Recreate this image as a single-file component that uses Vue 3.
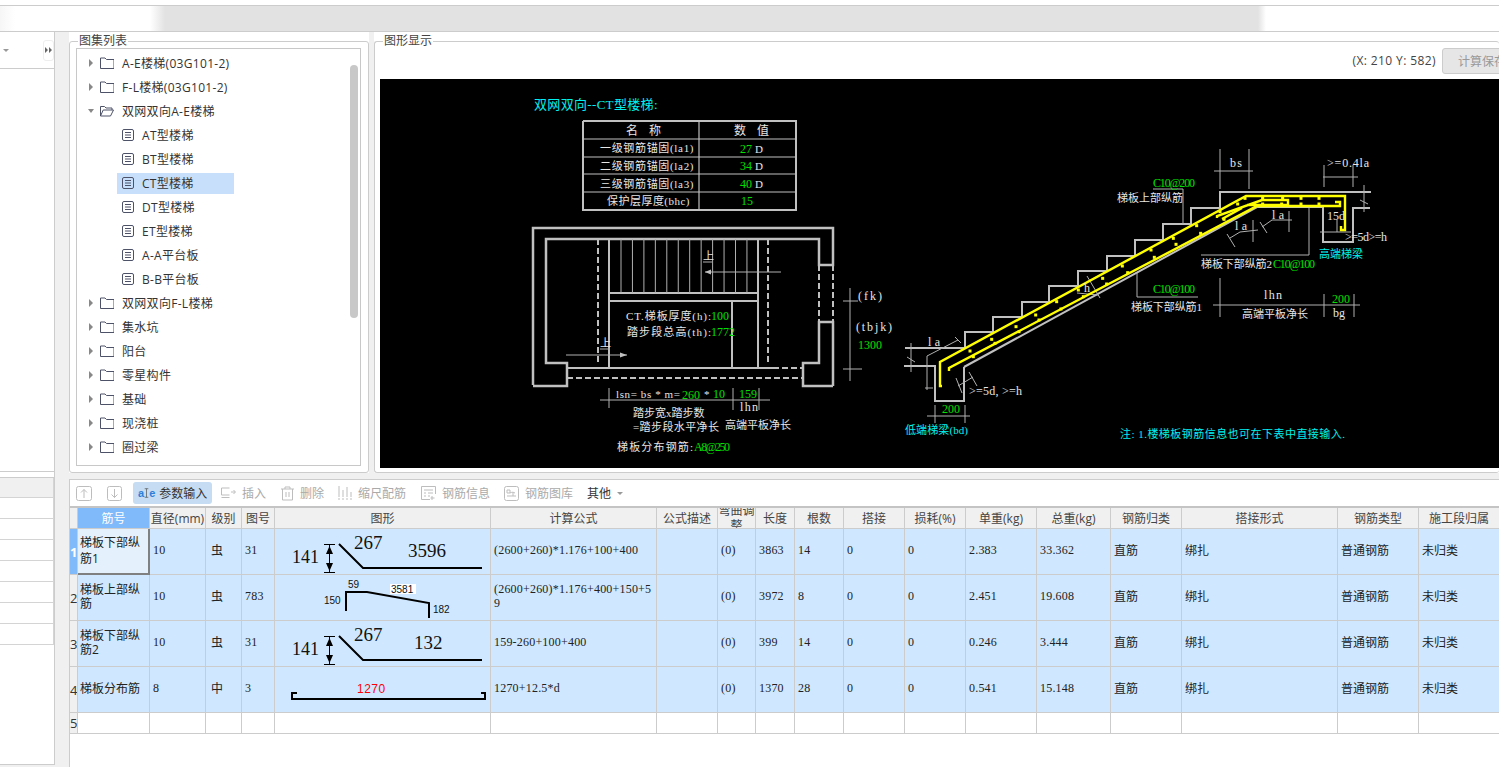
<template>
  <div class="app">
    <div class="topbar"><div class="blur"></div></div>

    <div class="main">
      <aside class="side">
        <div class="side-top">
          <span class="caret"></span>
          <span class="more">
            <svg width="7" height="6" viewBox="0 0 7 6"><path d="M0 0l3 3-3 3zM4 0l3 3-3 3z" /></svg>
          </span>
        </div>
        <div class="side-mid"></div>
        <div class="side-table">
          <div class="side-head"></div>
          <div v-for="n in 7" :key="n" class="side-row"></div>
        </div>
      </aside>

      <div class="content">
        <div class="upper">
          <section class="group tree-group">
            <div class="frame">
              <span class="legend">图集列表</span>
              <div class="tree">
                <div v-for="(item, i) in tree" :key="i" class="node" :class="{ leaf: item.type === 'doc' }">
                  <template v-if="item.type !== 'doc'">
                    <svg class="arrow" width="6" height="8" viewBox="0 0 6 8">
                      <path v-if="item.type === 'open'" d="M0 2h6L3 6z" />
                      <path v-else d="M1 0l4 4-4 4z" />
                    </svg>
                    <svg class="folder" width="14" height="12" viewBox="0 0 14 12">
                      <path v-if="item.type === 'open'" d="M.5 11V1.500h4l1.500 1.500h6v2M.5 11h10l3-6H3.200L.5 11z" />
                      <path v-else d="M.5 11.500v-10.500h4.500l1.500 1.500h7.500v9z" />
                    </svg>
                    <span>{{ item.label }}</span>
                  </template>
                  <div v-else class="leaf-in" :class="{ selected: item.selected }">
                    <svg class="doc" width="12" height="12" viewBox="0 0 12 12">
                      <rect x=".5" y=".5" width="11" height="11" rx="1.500" />
                      <path d="M3 3.500h6M3 6h6M3 8.500h6" />
                    </svg>
                    <span>{{ item.label }}</span>
                  </div>
                </div>
              </div>
              <div class="scrollbar"></div>
            </div>
          </section>

          <section class="group draw-group">
            <div class="frame draw-frame">
              <span class="legend">图形显示</span>
              <div class="coord-row">
                <span class="coord">(X: 210 Y: 582)</span>
                <button class="save" disabled>计算保存</button>
              </div>
              <div class="canvas">
                <svg class="cad" width="1119" height="389" viewBox="380 79 1119 389">
                  <polyline v-for="(p, i) in thick" :key="'k' + i" :points="p" class="l-thick" />
                  <polyline v-for="(p, i) in profile" :key="'p' + i" :points="p" class="l-profile" />
                  <polyline v-for="(p, i) in mid" :key="'m' + i" :points="p" class="l-mid" />
                  <polyline v-for="(p, i) in dashed" :key="'d' + i" :points="p" class="l-dash" />
                  <polyline v-for="(p, i) in thin" :key="'t' + i" :points="p" class="l-thin" />
                  <polygon points="705,272 711,269.500 711,274.500" fill="#c0c0c0" />
                  <polygon points="627,355 620,352.500 620,357.500" fill="#c0c0c0" />
                  <polyline v-for="(p, i) in rebar" :key="'r' + i" :points="p" class="l-bar" />
                  <rect v-for="(d, i) in dots" :key="'o' + i" :x="d[0] - 1.500" :y="d[1] - 1.500" width="3" height="3" fill="#ffff00" />
                  <text
                    v-for="(t, i) in labels"
                    :key="'x' + i"
                    :x="t.x"
                    :y="t.y"
                    :fill="colors[t.c || 'w']"
                    :font-size="t.s || 11"
                    :textLength="textWidth(t)"
                  >{{ t.t }}</text>
                </svg>
              </div>
            </div>
          </section>
        </div>

        <section class="panel">
          <div class="toolbar">
            <span class="tool">
              <svg width="16" height="15" viewBox="0 0 16 15"><rect x=".5" y=".5" width="15" height="14" rx="2" /><path d="M8 12V3.500M5 6.500l3-3 3 3" /></svg>
            </span>
            <span class="tool">
              <svg width="15" height="15" viewBox="0 0 15 15"><rect x=".5" y=".5" width="14" height="14" rx="2" /><path d="M7.500 3v8.500M4.500 8.500l3 3 3-3" /></svg>
            </span>
            <span class="tool active">
              <span class="ae">a<svg width="5" height="14" viewBox="0 0 7 14"><path d="M1 1h5M1 13h5M3.500 1v12" /></svg>e</span>
              <span>参数输入</span>
            </span>
            <span class="tool off">
              <svg width="15" height="12" viewBox="0 0 15 12"><path d="M8.500 1h-8v7h8M.5 10.500h8M10 5h4M12.500 3l2 2-2 2" /></svg>
              <span>插入</span>
            </span>
            <span class="tool off tight">
              <svg width="13" height="15" viewBox="0 0 13 15"><path d="M0 3h13M4 3V1h5v2M1.500 3v11h10V3M5 6v5M8 6v5" /></svg>
              <span>删除</span>
            </span>
            <span class="tool off">
              <svg width="14" height="14" viewBox="0 0 14 14"><path d="M1 0v11M5 4v7M9 1v10M13 6v5M0 13h2M4 13h2M8 13h2M12 13h2" /></svg>
              <span>缩尺配筋</span>
            </span>
            <span class="tool off tight">
              <svg width="15" height="15" viewBox="0 0 15 15"><path d="M9 13.500H.5v-13h14V8M3 4h9M3 7h2M7 7h5M3 10h2M7 10h2M11 10v4M9.500 12h4" /></svg>
              <span>钢筋信息</span>
            </span>
            <span class="tool off">
              <svg width="15" height="15" viewBox="0 0 15 15"><rect x=".5" y=".5" width="14" height="14" rx="2" /><path d="M3 4h3v3H3zM3 10h9M9 6v4M6 7c2-1 3-1 5 0" /></svg>
              <span>钢筋图库</span>
            </span>
            <span class="tool other">
              <span>其他</span>
              <span class="caret small"></span>
            </span>
          </div>

          <table class="grid">
            <colgroup>
              <col :style="{ width: '8px' }" />
              <col v-for="c in columns" :key="c.key" :style="{ width: c.w + 'px' }" />
            </colgroup>
            <thead>
              <tr>
                <th class="corner"></th>
                <th v-for="c in columns" :key="c.key" :class="{ current: c.key === 'name' }">
                  <div class="th-in">{{ c.label }}</div>
                </th>
              </tr>
            </thead>
            <tbody>
              <tr v-for="(row, i) in rows" :key="row.name">
                <td class="rowno" :class="{ current: i === 0 }"><div>{{ i + 1 }}</div></td>
                <td
                  v-for="c in columns"
                  :key="c.key"
                  :class="[c.cls, { editing: i === 0 && c.key === 'name' }]"
                >
                  <svg v-if="c.key === 'shape'" class="shape" width="216" height="46" viewBox="0 0 216 46">
                    <template v-if="row.shape === 'bent'">
                      <text class="big" x="18" y="35" font-size="18">141</text>
                      <text class="big" x="80" y="21" font-size="19">267</text>
                      <text class="big" :x="row.lx" y="29" font-size="19">{{ row.lt }}</text>
                      <path d="M50 16.500h11M50 44.500h11M55.500 17v27" class="ink1" />
                      <path d="M55.500 18l-3.500 8h7zM55.500 43l-3.500-8h7z" fill="#000" />
                      <path d="M65 16l24 24h119" class="ink2" />
                    </template>
                    <template v-else-if="row.shape === 'crank'">
                      <rect x="116" y="10" width="26" height="10" fill="#fff" />
                      <text class="small" x="74" y="14">59</text>
                      <text class="small" x="117" y="19">3581</text>
                      <text class="small" x="50" y="30">150</text>
                      <text class="small" x="159" y="39">182</text>
                      <path d="M72 37V18h21l62 11v15" class="ink2" />
                    </template>
                    <template v-else>
                      <text class="red" x="83" y="27">1270</text>
                      <path d="M23 27h-5v6h193v-6h-4" class="ink2" />
                    </template>
                  </svg>
                  <template v-else>{{ row[c.key] }}</template>
                </td>
              </tr>
              <tr class="empty">
                <td class="rowno"><div>5</div></td>
                <td v-for="c in columns" :key="c.key"></td>
              </tr>
            </tbody>
          </table>
        </section>
      </div>
    </div>
  </div>
</template>

<script setup>
const tree = [
  { label: 'A-E楼梯(03G101-2)', type: 'folder' },
  { label: 'F-L楼梯(03G101-2)', type: 'folder' },
  { label: '双网双向A-E楼梯', type: 'open' },
  { label: 'AT型楼梯', type: 'doc' },
  { label: 'BT型楼梯', type: 'doc' },
  { label: 'CT型楼梯', type: 'doc', selected: true },
  { label: 'DT型楼梯', type: 'doc' },
  { label: 'ET型楼梯', type: 'doc' },
  { label: 'A-A平台板', type: 'doc' },
  { label: 'B-B平台板', type: 'doc' },
  { label: '双网双向F-L楼梯', type: 'folder' },
  { label: '集水坑', type: 'folder' },
  { label: '阳台', type: 'folder' },
  { label: '零星构件', type: 'folder' },
  { label: '基础', type: 'folder' },
  { label: '现浇桩', type: 'folder' },
  { label: '圈过梁', type: 'folder' },
  { label: '', type: 'folder' }
]

const columns = [
  { key: 'name', label: '筋号', w: 72, cls: 'txt name' },
  { key: 'dia', label: '直径(mm)', w: 56, cls: 'num' },
  { key: 'grade', label: '级别', w: 36, cls: 'txt grade' },
  { key: 'fig', label: '图号', w: 33, cls: 'num' },
  { key: 'shape', label: '图形', w: 216, cls: 'fig' },
  { key: 'formula', label: '计算公式', w: 166, cls: 'num' },
  { key: 'desc', label: '公式描述', w: 61, cls: 'txt' },
  { key: 'adj', label: '弯曲调整', w: 38, cls: 'num' },
  { key: 'len', label: '长度', w: 39, cls: 'num' },
  { key: 'count', label: '根数', w: 49, cls: 'num' },
  { key: 'lap', label: '搭接', w: 61, cls: 'num' },
  { key: 'loss', label: '损耗(%)', w: 61, cls: 'num' },
  { key: 'unit', label: '单重(kg)', w: 71, cls: 'num' },
  { key: 'total', label: '总重(kg)', w: 74, cls: 'num' },
  { key: 'cat', label: '钢筋归类', w: 71, cls: 'txt' },
  { key: 'form', label: '搭接形式', w: 156, cls: 'txt' },
  { key: 'type', label: '钢筋类型', w: 81, cls: 'txt' },
  { key: 'seg', label: '施工段归属', w: 81, cls: 'txt' }
]

const common = { desc: '', adj: '(0)', lap: '0', loss: '0', cat: '直筋', form: '绑扎', type: '普通钢筋', seg: '未归类' }

const rows = [
  { ...common, name: '梯板下部纵筋1', dia: '10', grade: '虫', fig: '31', shape: 'bent', lt: '3596', lx: 134, formula: '(2600+260)*1.176+100+400', len: '3863', count: '14', unit: '2.383', total: '33.362' },
  { ...common, name: '梯板上部纵筋', dia: '10', grade: '虫', fig: '783', shape: 'crank', formula: '(2600+260)*1.176+400+150+59', len: '3972', count: '8', unit: '2.451', total: '19.608' },
  { ...common, name: '梯板下部纵筋2', dia: '10', grade: '虫', fig: '31', shape: 'bent', lt: '132', lx: 140, formula: '159-260+100+400', len: '399', count: '14', unit: '0.246', total: '3.444' },
  { ...common, name: '梯板分布筋', dia: '8', grade: '中', fig: '3', shape: 'hook', formula: '1270+12.5*d', len: '1370', count: '28', unit: '0.541', total: '15.148' }
]

const colors = { w: '#e6e6e6', g: '#00e000', c: '#00f0f0' }

// cad text follows the old bitmap font: full width for cjk, half for the rest
function textWidth(t) {
  if (t.w) return t.w
  const size = t.s || 11
  let width = 0
  for (const ch of t.t) width += ch.charCodeAt(0) > 255 ? size : size / 2
  return width
}

const stairLines = []
for (let i = 0; i < 12; i++) {
  const x = 621 + i * 11.45
  stairLines.push(`${x},239 ${x},293`)
}

const thick = [
  '533,385 533,228 833,228 833,265 819,265 819,239 546,239 546,363 567,363 567,386 533,386',
  '833,386 833,322 819,322 819,363 803,363 803,386 833,386'
]

const profile = [
  '583,121 796,121 796,210 583,210 583,121',
  '567,368 773,368',
  '609,239 609,368',
  '758,239 758,368',
  '732,301 732,368',
  '609,293 758,293',
  '609,301 758,301',
  '905,348 965,348 965,332 993,332 993,317 1022,317 1022,302 1049,302 1049,286 1078,286 1078,271 1107,271 1107,256 1135,256 1135,240 1163,240 1163,224 1191,224 1191,208 1220,208 1220,192 1371,192',
  '964,367 1257,207 1323,207 1323,242 1353,242 1353,208 1370,208',
  '904,366 935,366 935,401 964,401 964,367'
]

const mid = [
  '699,121 699,210',
  '583,139 796,139',
  '583,157 796,157',
  '583,174 796,174',
  '583,192 796,192'
]

const dashed = [
  '773,368 803,368',
  '567,378 803,378',
  '598,239 598,365',
  '768,239 768,365',
  '819,265 819,322',
  '833,265 833,322'
]

const thin = [
  ...stairLines,
  '781,272 705,272',
  '566,355 627,355',
  '703,262 712,262',
  '600,349 610,349',
  '609,388 609,408',
  '600,400 770,400',
  '733,388 733,410',
  '759,388 759,410',
  '850,288 850,381',
  '843,301 858,301',
  '843,369 862,369',
  '1220,149 1220,189',
  '1249,149 1249,189',
  '1214,171 1253,171',
  '1323,177 1358,177',
  '1324,165 1324,187',
  '1353,165 1353,187',
  '1153,189 1183,189 1183,224',
  '1201,255 1309,255 1309,208',
  '1137,273 1137,297 1198,297',
  '1213,305 1360,305',
  '1220,278 1220,317',
  '1324,294 1324,317',
  '1354,294 1354,317',
  '1262,227 1272,220 1292,220',
  '1289,211 1289,232',
  '1260,222 1267,233',
  '1230,238 1240,232 1258,230',
  '1253,220 1253,242',
  '1227,234 1235,247',
  '1087,276 1100,298',
  '1077,293 1098,295',
  '927,390 927,356 958,340',
  '925,388 933,388',
  '955,337 961,343',
  '911,343 911,372',
  '907,357 915,362',
  '1364,185 1364,212',
  '1360,200 1368,204',
  '956,378 962,393',
  '969,372 977,386',
  '958,386 973,377',
  '927,416 970,416',
  '935,405 935,423',
  '965,405 965,423',
  '1320,232 1351,232',
  '1337,220 1337,232'
]

const rebar = [
  '942,386 940,386 940,362 1246,196 1345,196 1345,230 1341,230 1341,226',
  '949,371 949,368 1257,206 1340,206 1340,202 1335,202',
  '1217,218 1217,216 1262,200 1288,200 1288,205 1247,205',
  '1222,219 1242,208'
]

const dotsZoom = [
  [240, 663], [305, 628], [378, 590], [437, 555], [500, 515], [565, 480], [638, 445], [697, 408], [783, 360], [850, 325], [920, 287], [990, 245], [1065, 205], [1118, 205], [1178, 205], [1233, 205], [1287, 205],
  [250, 680], [315, 640], [387, 605], [447, 570], [513, 537], [580, 500], [650, 462], [713, 428], [793, 382], [858, 343], [932, 310], [1002, 268], [1043, 222], [1118, 222], [1175, 222], [1233, 222], [1287, 222]
]
const dots = dotsZoom.map(([x, y]) => [890 + x / 3, 130 + y / 3])

const labels = [
  { x: 534, y: 109, t: '双网双向--CT型楼梯:', c: 'c', s: 13 },
  { x: 626, y: 135, t: '名', s: 12 },
  { x: 649, y: 135, t: '称', s: 12 },
  { x: 734, y: 135, t: '数', s: 12 },
  { x: 757, y: 135, t: '值', s: 12 },
  { x: 600, y: 152, t: '一级钢筋锚固(la1)' },
  { x: 600, y: 170, t: '二级钢筋锚固(la2)' },
  { x: 600, y: 188, t: '三级钢筋锚固(la3)' },
  { x: 607, y: 205, t: '保护层厚度(bhc)' },
  { x: 740, y: 153, t: '27', c: 'g', s: 12 },
  { x: 755, y: 153, t: 'D' },
  { x: 740, y: 170, t: '34', c: 'g', s: 12 },
  { x: 755, y: 170, t: 'D' },
  { x: 740, y: 188, t: '40', c: 'g', s: 12 },
  { x: 755, y: 188, t: 'D' },
  { x: 741, y: 205, t: '15', c: 'g', s: 12 },
  { x: 703, y: 260, t: '上' },
  { x: 600, y: 347, t: '上' },
  { x: 626, y: 320, t: 'CT.梯板厚度(h):', w: 85 },
  { x: 711, y: 320, t: '100', c: 'g', s: 12 },
  { x: 627, y: 336, t: '踏步段总高(th):', w: 84 },
  { x: 711, y: 336, t: '1772', c: 'g', s: 12 },
  { x: 616, y: 398, t: 'lsn= bs * m=', w: 64 },
  { x: 682, y: 399, t: '260', c: 'g', s: 12 },
  { x: 704, y: 398, t: '*' },
  { x: 713, y: 398, t: '10', c: 'g', s: 12 },
  { x: 739, y: 398, t: '159', c: 'g', s: 12 },
  { x: 740, y: 411, t: 'lhn', s: 12 },
  { x: 633, y: 417, t: '踏步宽x踏步数' },
  { x: 633, y: 431, t: '=踏步段水平净长', w: 86 },
  { x: 725, y: 429, t: '高端平板净长' },
  { x: 617, y: 451, t: '梯板分布钢筋:', w: 76 },
  { x: 694, y: 451, t: 'A8@250', c: 'g', s: 12 },
  { x: 858, y: 300, t: '(fk)', s: 12 },
  { x: 856, y: 331, t: '(tbjk)', s: 12 },
  { x: 858, y: 349, t: '1300', c: 'g', s: 12 },
  { x: 1230, y: 167, t: 'bs', s: 12 },
  { x: 1327, y: 167, t: '>=0.4la', w: 42, s: 12 },
  { x: 1153, y: 187, t: 'C10@200', c: 'g', w: 42, s: 12 },
  { x: 1117, y: 202, t: '梯板上部纵筋' },
  { x: 1201, y: 268, t: '梯板下部纵筋2', w: 71 },
  { x: 1273, y: 268, t: 'C10@100', c: 'g', w: 42, s: 12 },
  { x: 1153, y: 293, t: 'C10@100', c: 'g', w: 42, s: 12 },
  { x: 1131, y: 311, t: '梯板下部纵筋1', w: 71 },
  { x: 1264, y: 299, t: 'lhn', s: 12 },
  { x: 1242, y: 318, t: '高端平板净长' },
  { x: 1332, y: 303, t: '200', c: 'g', s: 12 },
  { x: 1333, y: 317, t: 'bg', s: 12 },
  { x: 1327, y: 220, t: '15d', s: 12 },
  { x: 1345, y: 241, t: '>=5d>=h', w: 42, s: 12 },
  { x: 1319, y: 258, t: '高端梯梁', c: 'c' },
  { x: 1272, y: 219, t: 'la', s: 12 },
  { x: 1235, y: 230, t: 'la', s: 12 },
  { x: 1084, y: 292, t: 'h', s: 12 },
  { x: 928, y: 346, t: 'la', s: 12 },
  { x: 969, y: 395, t: '>=5d, >=h', w: 53, s: 12 },
  { x: 942, y: 413, t: '200', c: 'g', s: 12 },
  { x: 905, y: 434, t: '低端梯梁(bd)', c: 'c', w: 63 },
  { x: 1120, y: 438, t: '注: 1.楼梯板钢筋信息也可在下表中直接输入.', c: 'c', w: 225 }
]
</script>

<style scoped>
.app {
  width: 1499px;
  height: 767px;
  overflow: hidden;
  display: flex;
  flex-direction: column;
  background: #f0f0f0;
  color: #333;
  font-family: "Open Sans", "Noto Sans CJK SC", sans-serif;
  font-size: 12px;
}

.topbar {
  height: 32px;
  flex: none;
  padding-top: 5px;
  box-sizing: border-box;
  background: #fff;
}

.blur {
  height: 27px;
  box-sizing: border-box;
  border-top: 1px solid #ccc;
  border-bottom: 1px solid #ccc;
  background: linear-gradient(90deg, #f6f6f6 0, #fff 15px, #fff 150px, #e2e2e2 165px, #e2e2e2 1258px, #fff 1266px, #fff 100%);
}

.main {
  flex: 1;
  display: flex;
  min-height: 0;
}

.side {
  width: 55px;
  height: 733px;
  flex: none;
  box-sizing: border-box;
  background: #fff;
  border-right: 1px solid #ccc;
  border-bottom: 1px solid #ccc;
}

.side-top {
  height: 37px;
  box-sizing: border-box;
  display: flex;
  align-items: center;
  padding-left: 3px;
  border-bottom: 1px solid #ccc;
}

.caret {
  width: 0;
  height: 0;
  border-left: 3px solid transparent;
  border-right: 3px solid transparent;
  border-top: 3px solid #999;
}

.more {
  margin-left: 34px;
  width: 9px;
  height: 19px;
  display: flex;
  align-items: center;
  justify-content: center;
  fill: #666;
  border: 1px solid #eee;
  border-radius: 3px;
}

.side-mid {
  height: 403px;
  box-sizing: border-box;
  border-bottom: 1px solid #ccc;
}

.side-table {
  margin-top: 5px;
  border-top: 1px solid #ccc;
}

.side-head {
  height: 20px;
  background: #f0f0f0;
  border-bottom: 1px solid #d4d4d4;
  border-right: 1px solid #d4d4d4;
  box-sizing: border-box;
}

.side-row {
  height: 21px;
  box-sizing: border-box;
  border-bottom: 1px solid #d4d4d4;
  border-right: 1px solid #d4d4d4;
}

.content {
  width: 1430px;
  margin-left: 14px;
  flex: none;
  display: flex;
  flex-direction: column;
}

.upper {
  height: 441px;
  flex: none;
  display: flex;
  gap: 5px;
}

.group {
  background: #fff;
  padding-top: 9px;
  box-sizing: border-box;
}

.tree-group {
  width: 300px;
  flex: none;
}

.draw-group {
  flex: 1;
  min-width: 0;
}

.frame {
  position: relative;
  height: 432px;
  box-sizing: border-box;
  border: 1px solid #ccc;
  border-radius: 3px;
}

.tree-group .frame {
  padding: 6px 7px 6px 6px;
}

.draw-frame {
  border-right: 0;
}

.legend {
  position: absolute;
  top: -8px;
  left: 8px;
  padding: 0 1px;
  line-height: 14px;
  background: #fff;
  color: #444;
}

.tree {
  height: 418px;
  box-sizing: border-box;
  padding-top: 2px;
  border: 1px solid #c8c8c8;
  overflow: hidden;
  letter-spacing: .3px;
}

.node {
  height: 24px;
  display: flex;
  align-items: center;
  padding-left: 11px;
  white-space: nowrap;
}

.node.leaf {
  padding-left: 40px;
}

.arrow {
  flex: none;
  fill: #888;
}

.folder {
  flex: none;
  margin: 0 8px 0 6px;
  fill: none;
  stroke: #4d5268;
}

.leaf-in {
  width: 117px;
  height: 21px;
  display: flex;
  align-items: center;
  padding-left: 5px;
  box-sizing: border-box;
}

.leaf-in.selected {
  background: #c7dffa;
}

.doc {
  flex: none;
  margin-right: 8px;
  fill: none;
  stroke: #4d5268;
}

.scrollbar {
  position: absolute;
  left: 280px;
  top: 23px;
  width: 8px;
  height: 253px;
  border-radius: 4px;
  background: #c8c8c8;
}

.coord-row {
  height: 37px;
  display: flex;
  justify-content: flex-end;
  align-items: center;
  overflow: hidden;
}

.coord {
  color: #444;
  margin-right: 6px;
  letter-spacing: .4px;
}

.save {
  width: 90px;
  height: 26px;
  margin-right: -33px;
  flex: none;
  padding: 0 0 0 15px;
  text-align: left;
  font: inherit;
  color: #999;
  background: #e6e6e6;
  border: 1px solid #ccc;
  border-radius: 3px;
}

.canvas {
  margin-left: 5px;
  height: 389px;
  background: #000;
}

.cad {
  display: block;
  font-family: "Liberation Serif", "Noto Sans CJK SC", serif;
}

.l-thick,
.l-profile,
.l-mid,
.l-thin,
.l-dash,
.l-bar {
  fill: none;
}

.l-thick {
  stroke: #c0c0c0;
  stroke-width: 2.500;
}

.l-profile {
  stroke: #c0c0c0;
  stroke-width: 2;
}

.l-mid {
  stroke: #c0c0c0;
  stroke-width: 1.200;
}

.l-dash {
  stroke: #c0c0c0;
  stroke-width: 2;
  stroke-dasharray: 6 3;
}

.l-thin {
  stroke: #b0b0b0;
  stroke-width: 1;
}

.l-bar {
  stroke: #ffff00;
  stroke-width: 2.400;
}

.panel {
  flex: 1;
  min-height: 0;
  margin-top: 6px;
  background: #fff;
  border-top: 1px solid #ccc;
  border-left: 1px solid #ccc;
  overflow: hidden;
}

.toolbar {
  height: 28px;
  box-sizing: border-box;
  display: flex;
  align-items: center;
  gap: 15px;
  padding-left: 6px;
  border-bottom: 2px solid #c4c4c4;
}

.tool {
  display: flex;
  align-items: center;
  gap: 6px;
  white-space: nowrap;
}

.tool svg {
  fill: none;
  stroke: #bdbdbd;
}

.tool.off {
  color: #aaa;
}

.tool.active {
  width: 79px;
  height: 22px;
  box-sizing: border-box;
  margin: 0 -6px 0 -4px;
  padding-left: 5px;
  gap: 4px;
  border-radius: 3px;
  background: #c5dcf2;
}

.tool.tight {
  margin-right: -1px;
}

.tool.other {
  margin-left: -1px;
}

.ae {
  display: flex;
  align-items: center;
  font-family: "Liberation Sans", sans-serif;
  font-size: 11px;
  font-weight: bold;
  color: #2f7fd8;
}

.ae svg {
  stroke: #555;
}

.caret.small {
  margin-top: 1px;
}

.grid {
  width: 1430px;
  table-layout: fixed;
  border-collapse: separate;
  border-spacing: 0;
}

.grid th,
.grid td {
  box-sizing: border-box;
  padding: 0;
  border-right: 1px solid #ccc;
  border-bottom: 1px solid #ccc;
}

.grid th {
  height: 21px;
  font-weight: normal;
  color: #444;
  background: #f0f0f0;
}

.th-in {
  height: 20px;
  overflow: hidden;
  display: flex;
  align-items: center;
  justify-content: center;
  line-height: 15px;
  text-align: center;
  white-space: normal;
}

.grid th.current {
  background: #80bafa;
  color: #fff;
}

.grid td {
  height: 46px;
  background: #cfe8ff;
  line-height: 14px;
  vertical-align: middle;
  color: #222;
}

.grid td.txt {
  padding: 0 3px 2px;
}

.grid td.name {
  padding: 0 2px 1px;
}

.grid td.grade {
  padding: 0 5px 2px;
}

.grid td.num {
  padding: 0 3px 3px;
  font-family: "Liberation Serif", serif;
  letter-spacing: .2px;
  word-break: break-all;
}

.grid td.fig {
  padding: 0;
  overflow: hidden;
  vertical-align: top;
}

.grid td.editing {
  background: #e4f1fc;
  line-height: 16px;
  border-right: 2px solid #808080;
  border-bottom: 2px solid #808080;
}

.grid td.rowno {
  background: #f0f0f0;
  overflow: hidden;
  font-size: 13px;
  color: #333;
}

.grid td.rowno div {
  width: 7px;
  text-align: center;
}

.grid td.rowno.current {
  background: #80bafa;
  color: #fff;
  font-weight: bold;
}

.grid .empty td {
  height: 21px;
  background: #fff;
}

.grid .empty td.rowno {
  background: #f0f0f0;
}

.shape {
  display: block;
  margin: -1px 0 0 -1px;
}

.big {
  font-family: "Liberation Serif", serif;
  fill: #111;
}

.small {
  font-family: "Liberation Sans", sans-serif;
  font-size: 10px;
  fill: #111;
}

.red {
  font-family: "Liberation Sans", sans-serif;
  font-size: 12px;
  letter-spacing: .5px;
  fill: #f00;
}

.ink1 {
  fill: none;
  stroke: #000;
  stroke-width: 1;
}

.ink2 {
  fill: none;
  stroke: #000;
  stroke-width: 2;
}
</style>

<style>
html,
body {
  margin: 0;
  overflow: hidden;
}
</style>
